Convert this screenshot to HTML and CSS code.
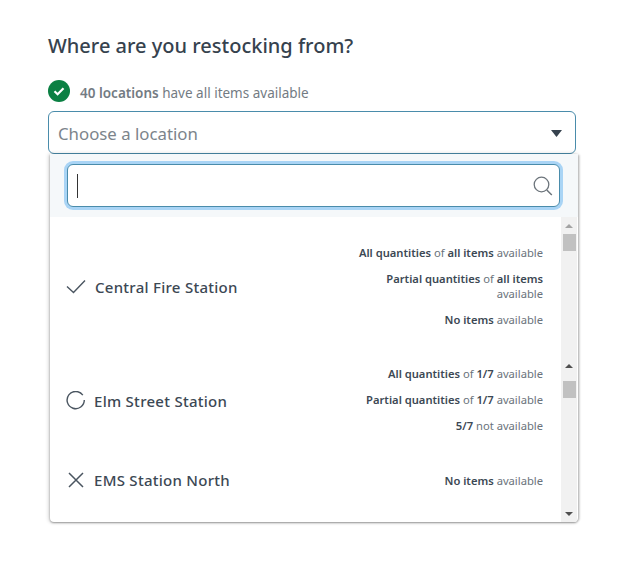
FILE: index.html
```html
<!DOCTYPE html>
<html lang="en">
<head>
<meta charset="utf-8">
<title>Restock</title>
<link rel="stylesheet" href="styles.css">
</head>
<body>
<main class="page">
  <h1 class="title">Where are you restocking from?</h1>
  <div class="summary">
    <svg class="ok" viewBox="0 0 22 22" width="22" height="22"><circle cx="11" cy="11" r="11" fill="#0b8043"/><path d="M6.5 11.3l3.1 3 5.9-6" fill="none" stroke="#fff" stroke-width="2.2"/></svg>
    <span><b>40 locations</b> have all items available</span>
  </div>
  <div class="select">
    <span>Choose a location</span>
    <svg class="caret" viewBox="0 0 11 7" width="11" height="7"><path d="M0 0h11L5.500 7z" fill="#36424e"/></svg>
    <div class="panel">
      <div class="search">
        <div class="input">
          <i class="cursor"></i>
          <svg viewBox="0 0 20 20" width="20" height="20"><circle cx="8.500" cy="8.500" r="7.300" fill="none" stroke="#6d757c" stroke-width="1.300"/><path d="M13.800 14l5 5" stroke="#6d757c" stroke-width="1.500"/></svg>
        </div>
      </div>
      <div class="body">
        <div class="list">
          <div class="row r1">
            <div class="name wide"><svg viewBox="0 0 20 20" width="20" height="20"><path d="M1 9.500l6.500 6L19 3.500" fill="none" stroke="#4a5560" stroke-width="1.400"/></svg><span>Central Fire Station</span></div>
            <div class="notes">
              <p><b>All quantities</b> of <b>all items</b> available</p>
              <p><b>Partial quantities</b> of <b>all items</b> available</p>
              <p><b>No items</b> available</p>
            </div>
          </div>
          <div class="row r2">
            <div class="name low"><svg viewBox="0 0 20 20" width="20" height="20"><path d="M16.800 4.200A8.600 8.600 0 1 0 18.300 9" fill="none" stroke="#4a5560" stroke-width="1.400"/></svg><span>Elm Street Station</span></div>
            <div class="notes">
              <p><b>All quantities</b> of <b>1/7</b> available</p>
              <p><b>Partial quantities</b> of <b>1/7</b> available</p>
              <p><b>5/7</b> not available</p>
            </div>
          </div>
          <div class="row r3">
            <div class="name"><svg viewBox="0 0 20 20" width="20" height="20"><path d="M3 3l14 14M17 3L3 17" fill="none" stroke="#4a5560" stroke-width="1.500"/></svg><span>EMS Station North</span></div>
            <div class="notes"><p><b>No items</b> available</p></div>
          </div>
          <div class="row r4"><div class="name clipped"><span>Forbes Road</span></div></div>
        </div>
        <div class="scroll">
          <i class="up"></i><i class="thumb first"></i><i class="up second"></i><i class="thumb"></i><i class="down"></i>
        </div>
      </div>
    </div>
  </div>
</main>
</body>
</html>
```
FILE: styles.css
```css
* { box-sizing: border-box; }
html, body { margin: 0; height: 573px; overflow: hidden; background: #fff; }
body { font-family: "Noto Sans", "Open Sans", sans-serif; color: #36424e; }
.page { padding: 32px 49px 0 48px; }
.title { margin: 0; font-size: 20px; line-height: 27px; font-weight: 500; color: #36424e; }
.summary { display: flex; align-items: center; gap: 10px; margin-top: 23px; height: 22px; font-size: 13.500px; color: #737b83; }
.summary b { font-weight: 600; }
.ok { flex: none; margin-top: -4px; }
.select { position: relative; display: flex; align-items: center; justify-content: space-between; height: 43px; margin-top: 7px; padding: 2px 13px 0 9px; border: 1px solid #4a8cab; border-radius: 6px; background: #fff; font-size: 16.800px; color: #7c848b; }
.panel { position: absolute; left: 1px; top: 42px; width: 528px; height: 368px; display: flex; flex-direction: column; overflow: hidden; background: #fff; border-radius: 0 0 4px 4px; box-shadow: 0 1px 2px rgba(0,0,0,.35), -1px 0 4px rgba(0,0,0,.2), 3px 0 2px -1px rgba(0,0,0,.12); }
.search { flex: none; height: 63px; padding: 10px 18px 0 17px; background: #f5f8fa; }
.input { display: flex; align-items: center; justify-content: space-between; height: 43px; padding: 0 6px 0 9px; background: #fff; border: 1px solid #4a8cab; border-radius: 6px; box-shadow: 0 0 0 3px #a9d4f5; }
.cursor { width: 1px; height: 24px; background: #333; }
.body { flex: 1; min-height: 0; display: flex; }
.list { flex: 1; min-width: 0; overflow: hidden; }
.row { display: flex; align-items: center; justify-content: space-between; padding: 0 18px 0 16px; }
.r1 { height: 124px; padding-top: 13px; }
.r2 { height: 103px; padding-top: 14px; }
.r3 { height: 62px; padding-top: 10px; }
.r4 { height: 40px; padding-top: 2px; }
.name { display: flex; align-items: center; gap: 8px; font-size: 15px; font-weight: 500; letter-spacing: 0.27px; color: #3c4854; white-space: nowrap; }
.wide { gap: 9px; margin-top: 2px; }
.low { margin-top: 2px; }
.clipped { padding-left: 1px; }
.notes { width: 200px; text-align: right; font-size: 11.200px; line-height: 15px; color: #6a737b; }
.notes p { margin: 0 0 11px; }
.notes p:last-child { margin-bottom: 0; }
.notes b { font-weight: 600; color: #3c4854; }
.scroll { flex: none; width: 16px; display: flex; flex-direction: column; align-items: center; background: #f1f1f1; margin-right: 1px; }
.scroll i { display: block; flex: none; }
.thumb { width: 13px; height: 17px; background: #c1c1c1; }
.first { margin-top: 6px; }
.up, .down { width: 0; height: 0; border-left: 4px solid transparent; border-right: 4px solid transparent; }
.up { border-bottom: 4px solid #a3a3a3; margin-top: 7px; }
.second { margin-top: 113px; margin-bottom: 13px; border-bottom-color: #505050; }
.down { margin-top: 114px; border-top: 4px solid #505050; }
```
